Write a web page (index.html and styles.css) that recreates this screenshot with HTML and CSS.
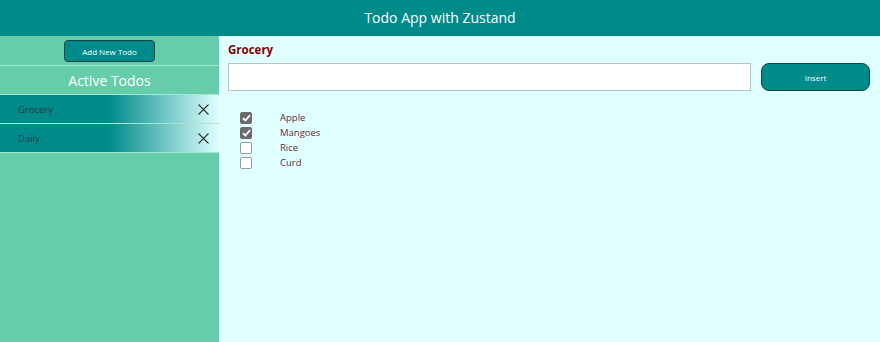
FILE: index.html
```html
<!DOCTYPE html>
<html>
<head>
<meta charset="utf-8">
<link rel="stylesheet" href="styles.css">
</head>
<body>
<header class="topbar">Todo App with Zustand</header>
<div class="layout">
  <aside class="sidebar">
    <div class="add-wrap"><button class="add-btn">Add New Todo</button></div>
    <div class="active-title">Active Todos</div>
    <div class="todo-row"><span class="todo-name">Grocery</span>
      <svg class="close" width="11" height="11" viewBox="0 0 11 11"><path d="M0.5 0.5L10.5 10.5M10.5 0.5L0.5 10.5" stroke="#333" stroke-width="1.1" fill="none"/></svg>
    </div>
    <div class="todo-row"><span class="todo-name">Daily</span>
      <svg class="close" width="11" height="11" viewBox="0 0 11 11"><path d="M0.5 0.5L10.5 10.5M10.5 0.5L0.5 10.5" stroke="#333" stroke-width="1.1" fill="none"/></svg>
    </div>
  </aside>
  <main class="main">
    <h2 class="list-title">Grocery</h2>
    <div class="entry">
      <input class="entry-input" type="text">
      <button class="insert-btn">Insert</button>
    </div>
    <ul class="items">
      <li class="item"><span class="box checked"><svg width="9" height="8" viewBox="0 0 9 8"><path d="M1 4.2L3.4 6.5L8 1.2" stroke="#fff" stroke-width="1.8" fill="none"/></svg></span><span class="label">Apple</span></li>
      <li class="item"><span class="box checked"><svg width="9" height="8" viewBox="0 0 9 8"><path d="M1 4.2L3.4 6.5L8 1.2" stroke="#fff" stroke-width="1.8" fill="none"/></svg></span><span class="label">Mangoes</span></li>
      <li class="item"><span class="box"></span><span class="label">Rice</span></li>
      <li class="item"><span class="box"></span><span class="label">Curd</span></li>
    </ul>
  </main>
</div>
</body>
</html>
```

FILE: styles.css
```css
* { box-sizing: border-box; }
html, body { margin: 0; padding: 0; height: 100%; }
body {
  font-family: "Open Sans", "Noto Sans", sans-serif;
  background: #e0ffff;
  display: flex;
  flex-direction: column;
}
.topbar {
  height: 36px;
  background: #008b8b;
  color: #fff;
  font-size: 14px;
  display: flex;
  align-items: center;
  justify-content: center;
  padding-bottom: 1px;
}
.layout {
  flex: 1;
  display: flex;
}
.sidebar {
  width: 219px;
  background: #66cdaa;
  display: flex;
  flex-direction: column;
}
.add-wrap {
  height: 30px;
  border-bottom: 1px solid #a8e6d2;
  display: flex;
  justify-content: center;
  padding-top: 4px;
}
.add-btn {
  width: 91px;
  height: 22px;
  background: #008b8b;
  border: 1px solid #1d4040;
  border-radius: 4px;
  color: #fff;
  font-family: inherit;
  font-size: 8px;
  font-weight: 400;
  padding: 0;
}
.active-title {
  height: 29px;
  border-bottom: 1px solid #a8e6d2;
  color: #fff;
  font-size: 14px;
  display: flex;
  align-items: center;
  justify-content: center;
}
.todo-row {
  height: 29px;
  border-bottom: 1px solid #a8e6d2;
  background: linear-gradient(to right, #008b8b 50%, #e0ffff 100%);
  display: flex;
  align-items: center;
  justify-content: space-between;
  padding: 0 10px 0 18px;
}
.todo-name {
  font-size: 9.5px;
  color: #2e3a3a;
}
.main {
  flex: 1;
  padding: 6px 10px 0 9px;
}
.list-title {
  margin: 0;
  font-size: 11.5px;
  font-weight: 700;
  color: #800000;
  height: 21px;
  line-height: 16px;
}
.entry {
  display: flex;
  gap: 10px;
}
.entry-input {
  flex: 1;
  height: 28px;
  background: #fff;
  border: 1px solid #b9c2c2;
  margin: 0;
}
.insert-btn {
  width: 109px;
  height: 28px;
  background: #008b8b;
  border: 1px solid #1d4040;
  border-radius: 8px;
  color: #fff;
  font-family: inherit;
  font-size: 8px;
  padding: 0;
}
.items {
  list-style: none;
  margin: 0;
  padding: 19px 0 0 12px;
}
.item {
  height: 15px;
  display: flex;
  align-items: center;
}
.box {
  width: 12px;
  height: 12px;
  border: 1px solid #9a9a9a;
  border-radius: 2px;
  background: #fff;
  display: flex;
  align-items: center;
  justify-content: center;
  margin-right: 28px;
}
.box.checked {
  background: #6b6b6b;
  border-color: #6b6b6b;
}
.label {
  font-size: 9.5px;
  color: #6b2a2a;
}
```
